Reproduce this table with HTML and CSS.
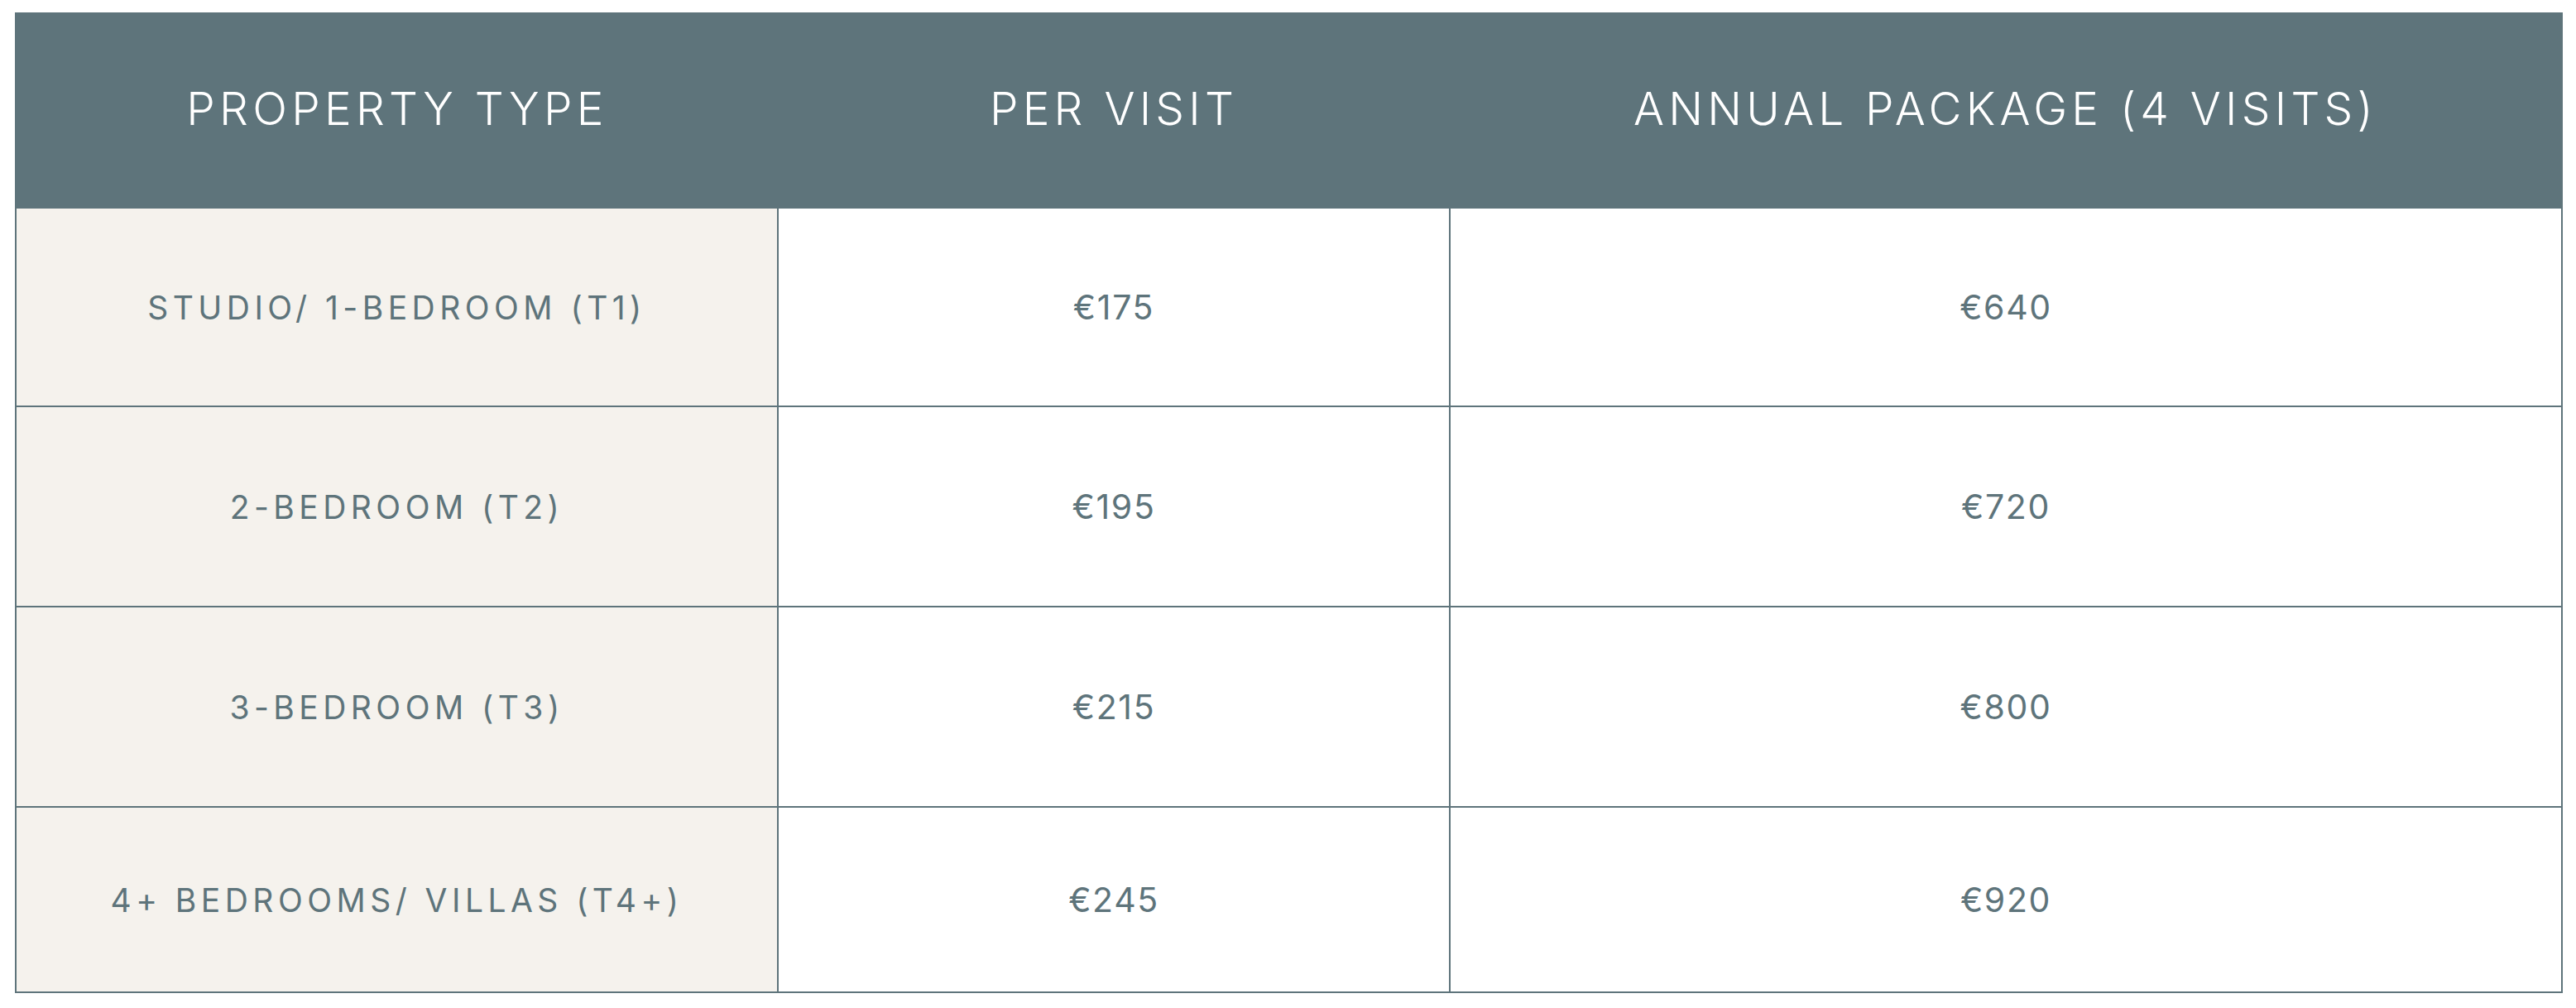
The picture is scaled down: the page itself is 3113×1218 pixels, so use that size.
FILE: index.html
```html
<!DOCTYPE html>
<html lang="en">
<head>
<meta charset="utf-8">
<title>Pricing</title>
<link rel="stylesheet" href="styles.css">
</head>
<body>
<div class="wrap">
  <table class="prices">
    <colgroup>
      <col class="c1">
      <col class="c2">
      <col class="c3">
    </colgroup>
    <thead>
      <tr class="head">
        <th>PROPERTY TYPE</th>
        <th>PER VISIT</th>
        <th>ANNUAL PACKAGE (4 VISITS)</th>
      </tr>
    </thead>
    <tbody>
      <tr class="r1">
        <td class="type">STUDIO/ 1-BEDROOM (T1)</td>
        <td class="price">€175</td>
        <td class="price">€640</td>
      </tr>
      <tr class="r2">
        <td class="type">2-BEDROOM (T2)</td>
        <td class="price">€195</td>
        <td class="price">€720</td>
      </tr>
      <tr class="r3">
        <td class="type">3-BEDROOM (T3)</td>
        <td class="price">€215</td>
        <td class="price">€800</td>
      </tr>
      <tr class="r4">
        <td class="type">4+ BEDROOMS/ VILLAS (T4+)</td>
        <td class="price">€245</td>
        <td class="price">€920</td>
      </tr>
    </tbody>
  </table>
</div>
</body>
</html>
```

FILE: styles.css
```css
html, body {
  margin: 0;
  padding: 0;
  background: #ffffff;
}

.wrap {
  padding: 15px 18px 0 18px;
}

.prices {
  width: 3077px;
  border-collapse: collapse;
  table-layout: fixed;
  border: 2px solid #5e747b;
  font-family: Inter, "Liberation Sans", sans-serif;
  color: #5e747b;
}

.c1 { width: 921px; }
.c2 { width: 812px; }
.c3 { width: 1344px; }

.head th {
  background: #5e747b;
  color: #ffffff;
  height: 227px;
  padding: 0 0 6px 0;
  font-weight: 300;
  font-size: 55px;
  letter-spacing: 0.095em;
  text-align: center;
  vertical-align: middle;
  border: 0;
}

td {
  padding: 0;
  text-align: center;
  vertical-align: middle;
  border: 2px solid #5e747b;
  background: #ffffff;
}

td.type {
  background: #f5f2ed;
  font-size: 39px;
  letter-spacing: 0.14em;
  font-weight: 400;
}

td.price {
  font-size: 41px;
  letter-spacing: 0.04em;
  font-weight: 400;
}

.r1 td { height: 238px; }
.r2 td { height: 240px; }
.r3 td { height: 240px; }
.r4 td { height: 222px; }
```
